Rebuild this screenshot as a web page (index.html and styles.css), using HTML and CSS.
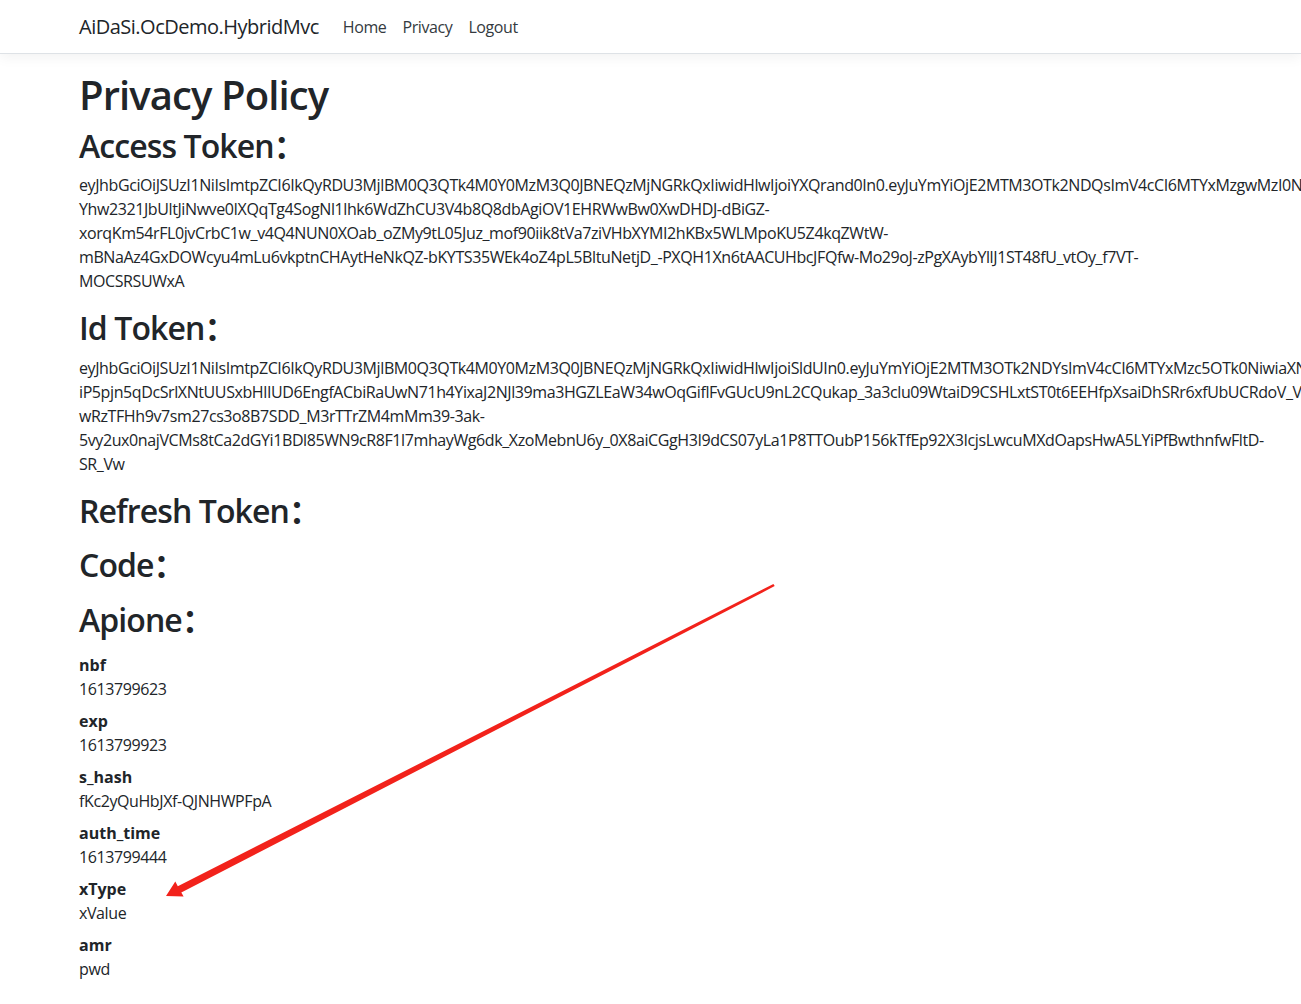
FILE: index.html
```html
<!DOCTYPE html>
<html lang="en">
  <head>
    <meta charset="utf-8">
    <title>Privacy Policy - AiDaSi.OcDemo.HybridMvc</title>
    <link rel="stylesheet" href="styles.css">
  </head>
  <body>
    <header class="navbar">
      <div class="container nav-inner">
        <a class="brand" href="#">AiDaSi.OcDemo.HybridMvc</a>
        <ul class="nav">
          <li><a class="nav-link" href="#">Home</a></li>
          <li><a class="nav-link" href="#">Privacy</a></li>
          <li><a class="nav-link" href="#">Logout</a></li>
        </ul>
      </div>
    </header>

    <main class="container">
      <h1>Privacy Policy</h1>

      <h2>Access Token：</h2>
      <p class="token">eyJhbGciOiJSUzI1NiIsImtpZCI6IkQyRDU3MjlBM0Q3QTk4M0Y0MzM3Q0JBNEQzMjNGRkQxIiwidHlwIjoiYXQrand0In0.eyJuYmYiOjE2MTM3OTk2NDQsImV4cCI6MTYxMzgwMzI0NCwiaXNzIjoiaHR0cHM6Ly9sb2NhbGhvc3Q6NTAwMSIsImNsaWVudF9pZCI6Im12YyIsInN1YiI6IjEiLCJhdXRoX3RpbWUiOjE2MTM3OTk0NDR9.k3uX-<br>Yhw2321JbUltJiNwve0IXQqTg4SogNl1lhk6WdZhCU3V4b8Q8dbAgiOV1EHRWwBw0XwDHDJ-dBiGZ-<br>xorqKm54rFL0jvCrbC1w_v4Q4NUN0XOab_oZMy9tL05Juz_mof90iik8tVa7ziVHbXYMI2hKBx5WLMpoKU5Z4kqZWtW-<br>mBNaAz4GxDOWcyu4mLu6vkptnCHAytHeNkQZ-bKYTS35WEk4oZ4pL5BltuNetjD_-PXQH1Xn6tAACUHbcJFQfw-Mo29oJ-zPgXAybYllJ1ST48fU_vtOy_f7VT-<br>MOCSRSUWxA</p>

      <h2>Id Token：</h2>
      <p class="token">eyJhbGciOiJSUzI1NiIsImtpZCI6IkQyRDU3MjlBM0Q3QTk4M0Y0MzM3Q0JBNEQzMjNGRkQxIiwidHlwIjoiSldUIn0.eyJuYmYiOjE2MTM3OTk2NDYsImV4cCI6MTYxMzc5OTk0NiwiaXNzIjoiaHR0cHM6Ly9sb2NhbGhvc3Q6NTAwMSIsImF1ZCI6Im12YyJ9.Tq8-<br>iP5pjn5qDcSrlXNtUUSxbHlIUD6EngfACbiRaUwN71h4YixaJ2NJl39ma3HGZLEaW34wOqGiflFvGUcU9nL2CQukap_3a3clu09WtaiD9CSHLxtST0t6EEHfpXsaiDhSRr6xfUbUCRdoV_Vq2nLw8xQe-<br>wRzTFHh9v7sm27cs3o8B7SDD_M3rTTrZM4mMm39-3ak-<br>5vy2ux0najVCMs8tCa2dGYi1BDl85WN9cR8F1l7mhayWg6dk_XzoMebnU6y_0X8aiCGgH3I9dCS07yLa1P8TTOubP156kTfEp92X3IcjsLwcuMXdOapsHwA5LYiPfBwthnfwFltD-<br>SR_Vw</p>

      <h2>Refresh Token：</h2>
      <p class="token"></p>

      <h2>Code：</h2>
      <p class="token"></p>

      <h2>Apione：</h2>
      <p class="token"></p>

      <dl class="claims">
        <dt>nbf</dt>
        <dd>1613799623</dd>
        <dt>exp</dt>
        <dd>1613799923</dd>
        <dt>s_hash</dt>
        <dd>fKc2yQuHbJXf-QJNHWPFpA</dd>
        <dt>auth_time</dt>
        <dd>1613799444</dd>
        <dt>xType</dt>
        <dd>xValue</dd>
        <dt>amr</dt>
        <dd>pwd</dd>
      </dl>
    </main>

    <!-- annotation arrow drawn over the screenshot -->
    <svg class="arrow" width="1301" height="1004" viewBox="0 0 1301 1004">
      <polygon fill="#f2221b"
               points="166,896 175.3,881.6 177.8,886.2 773.4,584 774.7,586.1 181.3,892.6 183.6,896.5"/>
    </svg>
  </body>
</html>
```

FILE: styles.css
```css
html{
  overflow-x : hidden;
}
body{
  margin : 0;
  font-family : "Open Sans", "Noto Sans", "Noto Sans CJK SC", sans-serif;
  font-size : 16px;
  line-height : 1.5;
  letter-spacing : -0.4px;
  color : #212529;
  background : #fff;
}
a{
  text-decoration : none;
}
.container{
  width : 1110px;
  margin-left : 79px;
}

/* top bar */
.navbar{
  height : 53px;
  background : #fff;
  border-bottom : 1px solid #dee2e6;
  box-shadow : 0 4px 12px rgba(0,0,0,.05);
  margin-bottom : 17px;
}
.nav-inner{
  height : 100%;
  display : flex;
  align-items : center;
}
.brand{
  font-size : 20px;
  line-height : 30px;
  letter-spacing : -0.5px;
  color : #212529;
  margin-right : 16px;
}
.nav{
  display : flex;
  list-style : none;
  margin : 0;
  padding : 0;
}
.nav-link{
  display : block;
  padding : 8px;
  color : #343a40;
}

/* headings */
h1, h2{
  font-weight : 600;
  line-height : 1.2;
  letter-spacing : -0.9px;
  margin : 0 0 8px;
}
h1{
  font-size : 40px;
}
h2{
  font-size : 32px;
}
.token{
  margin : 0 0 16px;
  white-space : nowrap;
}

/* claims list */
.claims{
  margin : -2px 0 16px;
}
.claims dt{
  font-weight : 700;
  letter-spacing : 0;
}
.claims dd{
  margin : 0 0 8px;
}

.arrow{
  position : absolute;
  left : 0;
  top : 0;
  pointer-events : none;
}
```
